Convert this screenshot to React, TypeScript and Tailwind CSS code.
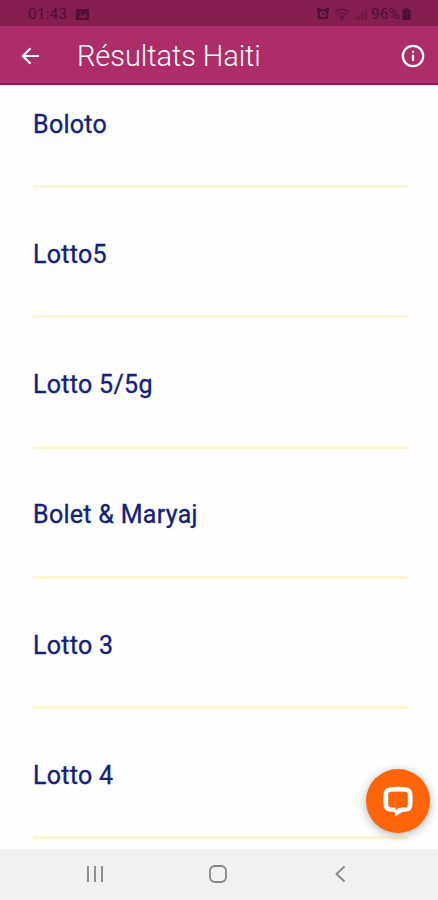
import type { ReactNode } from "react";

const games = ["Boloto", "Lotto5", "Lotto 5/5g", "Bolet & Maryaj", "Lotto 3", "Lotto 4"];

function StatusBar() {
  return (
    <div className="flex h-[26px] shrink-0 items-center bg-[#841f50] pl-7 pr-[27px] pt-0.5 text-[#4f1034]">
      <span className="w-[42px] pt-px text-[15.5px] leading-none tracking-[0.1px]">01:43</span>
      <svg className="ml-1.5" width="13" height="11" viewBox="0 0 13 12" preserveAspectRatio="none">
        <rect width="13" height="12" rx="1" fill="currentColor" />
        <path d="M2 9.5 4.8 6l2 2.2L9 5.3l2.4 4.2Z" fill="#841f50" />
        <circle cx="4" cy="3.4" r="1" fill="#841f50" />
      </svg>
      <div className="ml-auto flex items-center">
        <svg className="mr-px" width="12" height="12" viewBox="0 0 13 13">
          <path d="M0 0h4l-.5 1h6L9 0h4v4l-1-.4V12H1V3.6L0 4Z" fill="currentColor" />
          <circle cx="6.5" cy="6.8" r="3.6" fill="#841f50" />
          <path d="M6.5 4.3v2.8H9" stroke="currentColor" strokeWidth="1.3" fill="none" />
        </svg>
        <svg className="ml-1 opacity-80" width="16" height="13" viewBox="0 0 16 13" fill="none" stroke="currentColor" strokeWidth="1.1">
          <path d="M.8 4.2a10.5 10.5 0 0 1 14.4 0M3 6.8a7.3 7.3 0 0 1 10 0M5.3 9.2a4 4 0 0 1 5.4 0" />
          <path d="M8 12.5 6.2 10.4a2.7 2.7 0 0 1 3.6 0Z" fill="currentColor" stroke="none" />
        </svg>
        <svg className="ml-[5px] opacity-50" width="12" height="12" viewBox="0 0 12 12" fill="currentColor">
          <path d="M0 9h2v3H0zM3.3 7h2v5h-2zM6.6 4h2v8h-2zM10 1h1.5v11H10z" />
        </svg>
        <span className="ml-1 w-[30px] pt-px text-[15.5px] leading-none">96%</span>
        <svg className="ml-px" width="9" height="12" viewBox="0 0 9 13" fill="currentColor">
          <path d="M2.5 0h4v1.5H8a1 1 0 0 1 1 1V12a1 1 0 0 1-1 1H1a1 1 0 0 1-1-1V2.5a1 1 0 0 1 1-1h1.5Z" />
        </svg>
      </div>
    </div>
  );
}

function AppBar() {
  return (
    <header className="flex h-[59px] shrink-0 items-center border-b-2 border-[#a01255] bg-[#ae2d69] pl-[21px] pr-[13px] pt-0.5 text-white">
      <svg width="19" height="18" viewBox="0 0 19 18" fill="none" stroke="currentColor" strokeWidth="2.2">
        <path d="M18 9H2M9.5 1.2 1.8 9l7.7 7.8" />
      </svg>
      <h1 className="ml-[37px] pt-px text-[29px] font-light leading-none tracking-[-0.08px]">Résultats Haiti</h1>
      <svg className="ml-auto" width="24" height="24" viewBox="0 0 24 24" fill="none" stroke="currentColor" strokeWidth="2.2">
        <circle cx="12" cy="12" r="10.2" />
        <path d="M12 10.8v6.2M12 6.8V9" />
      </svg>
    </header>
  );
}

function NavButton({ label, children }: { label: string; children: ReactNode }) {
  return (
    <button aria-label={label} className="grid w-[122.5px] place-items-center">
      <svg width="20" height="20" viewBox="0 0 20 20" fill="none" stroke="currentColor" strokeWidth="1.8">
        {children}
      </svg>
    </button>
  );
}

export default function App() {
  return (
    <div className="relative flex h-[900px] w-[438px] flex-col overflow-hidden bg-[#fefefe] font-['Roboto',sans-serif]">
      <StatusBar />
      <AppBar />
      <main className="flex-1 overflow-hidden pl-[33px] pr-[30px]">
        {games.map((name) => (
          <section
            key={name}
            className="flex h-[130.25px] flex-col justify-end border-b-[3px] border-[#fdf6d3] pb-[46.5px] first:h-[103px]"
          >
            <h2 className="text-[25px] font-[450] leading-7 tracking-[0.3px] text-[#142179] [-webkit-text-stroke:0.35px_#142179]">
              {name}
            </h2>
          </section>
        ))}
      </main>
      <nav className="flex h-[51px] shrink-0 justify-center bg-[#f1f1f1] pb-0.5 pr-[3px] text-[#858585]">
        <NavButton label="Recents">
          <path d="M3 2v16M10 2v16M17 2v16" />
        </NavButton>
        <NavButton label="Home">
          <rect x="2" y="2" width="16" height="16" rx="5" />
        </NavButton>
        <NavButton label="Back">
          <path d="m14.5 2.5-8 7.5 8 7.5" />
        </NavButton>
      </nav>
      <button
        aria-label="Chat"
        className="absolute bottom-[67.5px] right-2 grid h-16 w-16 place-items-center rounded-full bg-[#ff6508] text-white shadow-[0_2px_10px_rgba(0,0,0,0.3)]"
      >
        <svg width="32" height="32" viewBox="0 0 32 32">
          <path
            fill="currentColor"
            fillRule="evenodd"
            d="M7.5 2.5Q16 1.2 24.5 2.5Q29.500 3 30.300 8Q31 14.500 30.300 21Q29.500 25.800 25 26.500L20.500 27L12.800 31.500V27L7.500 26.500Q2.500 26 1.700 21Q1 14.500 1.700 8Q2.500 3 7.500 2.500ZM8.500 6.800Q6.300 7 6.200 9V20Q6.300 22 8.500 22.300L13.500 22.500V25.200Q16 22.500 19.500 22.500L23.500 22.300Q25.700 22 25.800 20V9Q25.700 7 23.500 6.800Q16 6.300 8.500 6.800Z"
          />
        </svg>
      </button>
    </div>
  );
}
